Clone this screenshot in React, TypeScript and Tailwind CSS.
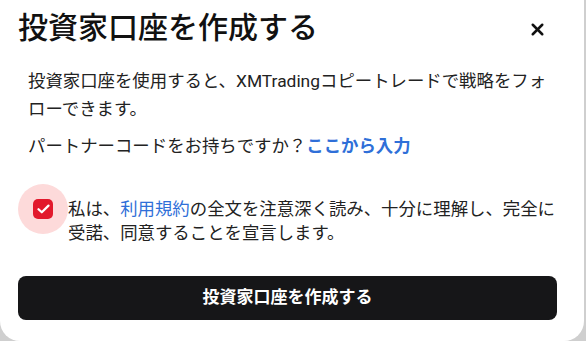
import { X } from "lucide-react";

const font = {
  fontFamily: 'Roboto, "Noto Sans CJK JP", "Noto Sans", sans-serif',
};

export default function App() {
  return (
    <div className="h-[341px] w-[586px] overflow-hidden bg-[#cfcfcf]" style={font}>
      <div className="flex h-[341px] w-[584px] flex-col rounded-b-[20px] bg-white pl-[18px] pr-[27px]">
        <div className="flex items-center justify-between pt-[7px]">
          <h2 className="text-[30px] font-medium leading-[42px] text-[#111]">投資家口座を作成する</h2>
          <button className="mr-[4px] mt-[2px] flex h-8 w-8 items-center justify-center text-[#111]">
            <X size={19} strokeWidth={3.2} />
          </button>
        </div>

        <div className="mt-[18px] pl-[10px] text-[17.4px] leading-[28px] text-[#222]">
          <p>投資家口座を使用すると、XMTradingコピートレードで戦略をフォローできます。</p>
          <p className="mt-[9px]">
            パートナーコードをお持ちですか？
            <a className="font-bold text-[#2f6fd8]">ここから入力</a>
          </p>
        </div>

        <div className="mt-[24px] flex items-start">
          <div className="flex h-[50px] w-[50px] shrink-0 items-center justify-center rounded-full bg-[#fddada]">
            <div className="flex h-[20px] w-[20px] items-center justify-center rounded-[5px] bg-[#e2192c]">
              <svg width="13" height="10" viewBox="0 0 13 10" fill="none">
                <path d="M1.5 5.2 4.8 8.3 11.5 1.6" stroke="white" strokeWidth="2.2" strokeLinecap="round" strokeLinejoin="round" />
              </svg>
            </div>
          </div>
          <p className="pt-[13px] text-[17.4px] leading-[24px] text-[#222]">
            私は、<a className="text-[#2f6fd8]">利用規約</a>
            の全文を注意深く読み、十分に理解し、完全に受諾、同意することを宣言します。
          </p>
        </div>

        <button className="mt-[31px] h-[44px] w-full rounded-[8px] bg-[#161618] text-[17px] font-bold text-white">
          投資家口座を作成する
        </button>
      </div>
    </div>
  );
}
